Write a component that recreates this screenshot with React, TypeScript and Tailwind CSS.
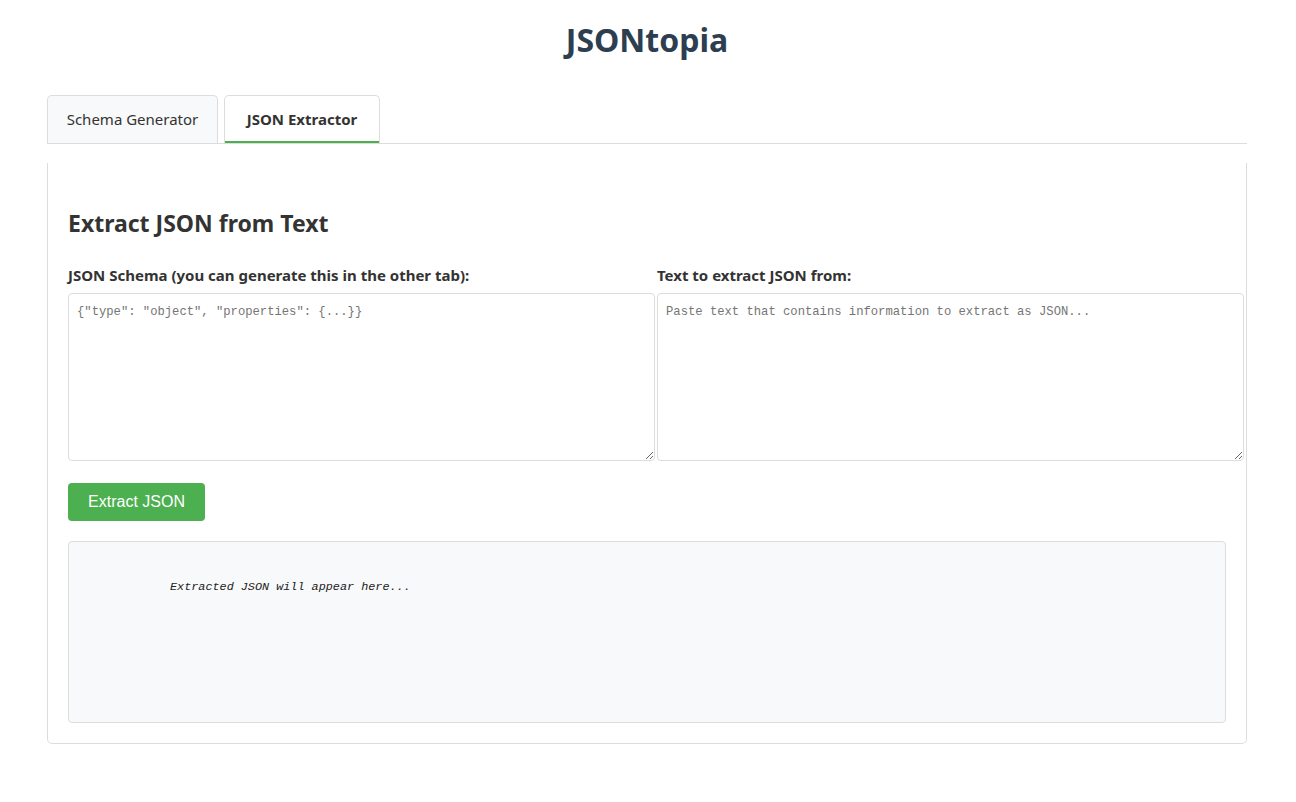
import React from "react";

export default function App() {
  const sans = { fontFamily: '"Noto Sans", "Open Sans", sans-serif' };
  const mono = { fontFamily: '"Liberation Mono", "DejaVu Sans Mono", monospace' };
  return (
    <div className="min-h-[802px] bg-white text-[#333]" style={sans}>
      <div className="ml-[47px] w-[1200px] pt-[18px]">
        <h1 className="text-center text-[32px] font-bold leading-[44px] text-[#2c3e50]">JSONtopia</h1>
        <div className="mt-[33px] flex gap-[6px] border-b border-[#ddd]">
          <div className="flex h-[48px] w-[171px] items-center justify-center rounded-t-[5px] border border-b-0 border-[#ddd] bg-[#f8f9fa] text-[15px] text-[#333]">
            Schema Generator
          </div>
          <div className="flex h-[48px] w-[156px] items-center justify-center rounded-t-[5px] border border-b-0 border-[#ddd] bg-white text-[15px] font-bold text-[#333] shadow-[inset_0_-2px_0_#4caf50]">
            JSON Extractor
          </div>
        </div>
        <div className="mt-[19px] rounded-b-[5px] border border-t-0 border-[#ddd] px-[20px] pb-[20px] pt-[44px]">
          <h2 className="text-[23px] font-bold leading-[32px] text-[#333]">Extract JSON from Text</h2>
          <div className="mt-[25px] grid grid-cols-[569px_569px] gap-x-[20px]">
            <div>
              <label className="block text-[15px] font-bold leading-[22px] text-[#333]">JSON Schema (you can generate this in the other tab):</label>
              <textarea
                className="mt-[7px] block h-[168px] w-[587px] resize-y rounded-[4px] border border-[#ddd] px-[8px] pb-[7px] pt-[9px] text-[12.2px] leading-[18px] text-[#333] placeholder:text-[#757575] outline-none"
                style={mono}
                placeholder='{"type": "object", "properties": {...}}'
              />
            </div>
            <div>
              <label className="block text-[15px] font-bold leading-[22px] text-[#333]">Text to extract JSON from:</label>
              <textarea
                className="mt-[7px] block h-[168px] w-[587px] resize-y rounded-[4px] border border-[#ddd] px-[8px] pb-[7px] pt-[9px] text-[12.2px] leading-[18px] text-[#333] placeholder:text-[#757575] outline-none"
                style={mono}
                placeholder="Paste text that contains information to extract as JSON..."
              />
            </div>
          </div>
          <button
            className="mt-[22px] block h-[38px] w-[137px] rounded-[4px] bg-[#4caf50] text-[16px] text-white"
            style={{ fontFamily: '"Liberation Sans", Arial, sans-serif' }}
          >
            Extract JSON
          </button>
          <div className="mt-[20px] h-[182px] rounded-[4px] border border-[#ddd] bg-[#f8f9fa] pl-[101px] pt-[36px]">
            <div className="text-[11.8px] italic leading-[18px] text-[#222]" style={mono}>
              Extracted JSON will appear here...
            </div>
          </div>
        </div>
      </div>
    </div>
  );
}
